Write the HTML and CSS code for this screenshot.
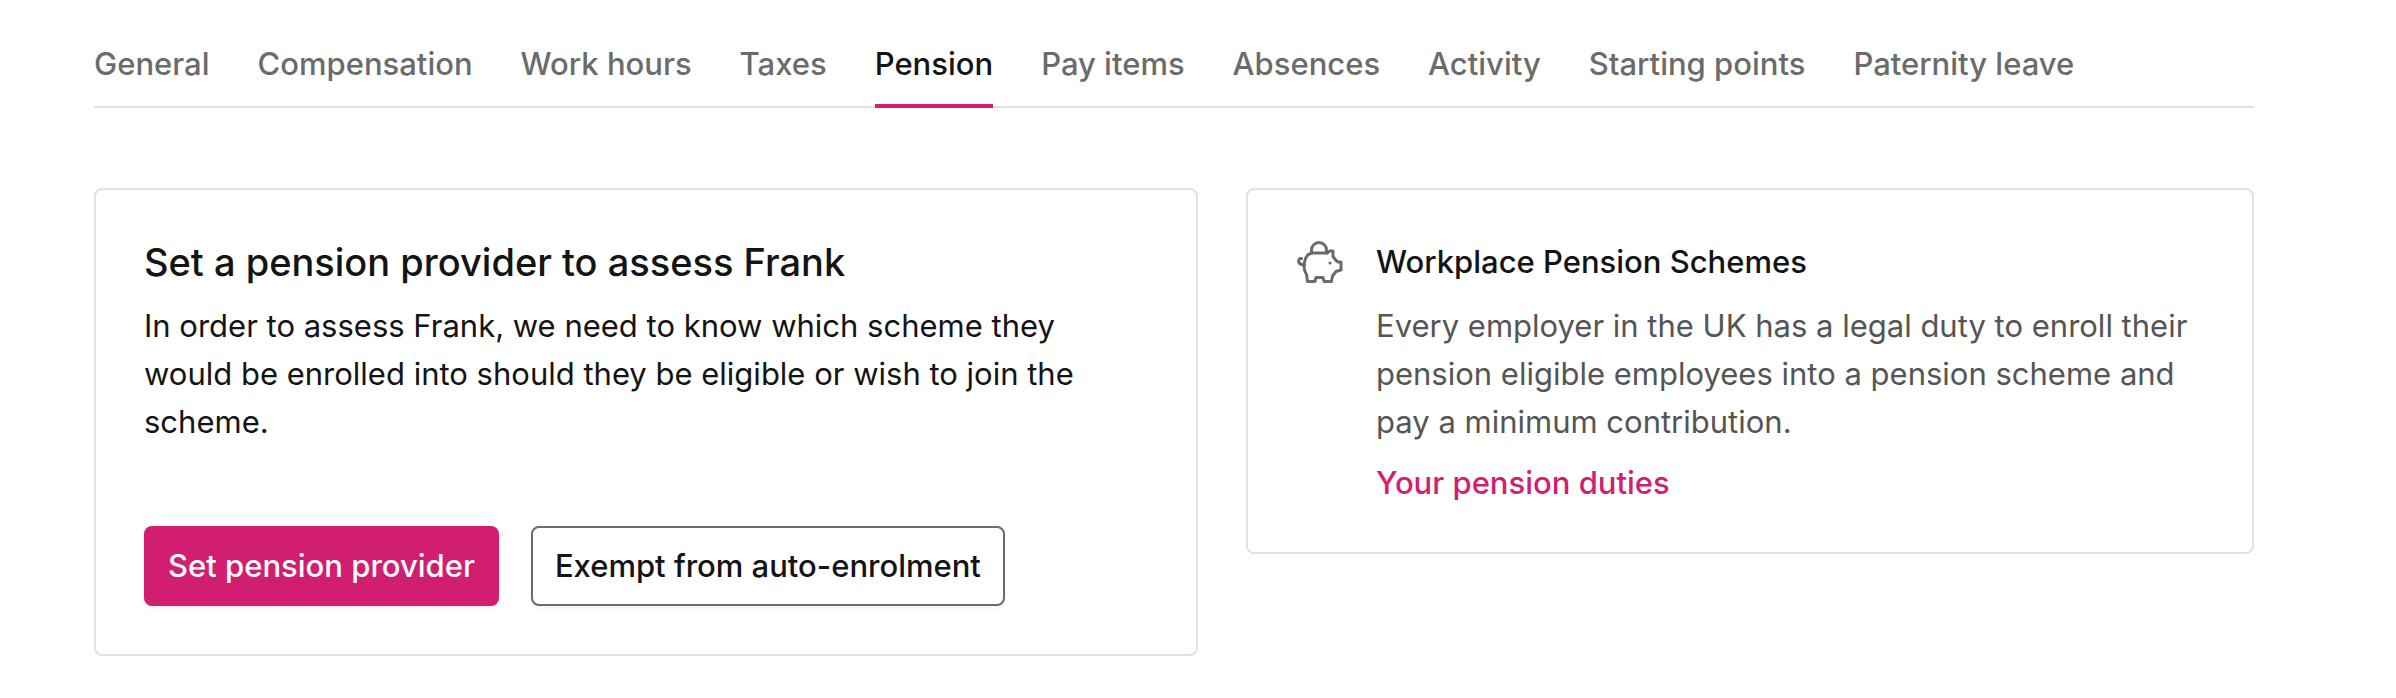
FILE: index.html
```html
<!DOCTYPE html>
<html lang="en">
<head>
<meta charset="utf-8">
<title>Pension</title>
<link rel="stylesheet" href="styles.css">
</head>
<body>
<div class="page">
  <nav class="tabs" aria-label="Employee sections">
    <a class="tab" href="#general">General</a>
    <a class="tab" href="#compensation">Compensation</a>
    <a class="tab" href="#work-hours">Work hours</a>
    <a class="tab" href="#taxes">Taxes</a>
    <a class="tab tab-active" href="#pension" aria-current="page">Pension</a>
    <a class="tab" href="#pay-items">Pay items</a>
    <a class="tab" href="#absences">Absences</a>
    <a class="tab" href="#activity">Activity</a>
    <a class="tab" href="#starting-points">Starting points</a>
    <a class="tab" href="#paternity-leave">Paternity leave</a>
  </nav>
  <main class="columns">
    <section class="card">
      <h1 class="title">Set a pension provider to assess Frank</h1>
      <p class="text">In order to assess Frank, we need to know which scheme they would be enrolled into should they be eligible or wish to join the scheme.</p>
      <div class="actions">
        <button class="button button-primary" type="button">Set pension provider</button>
        <button class="button" type="button">Exempt from auto-enrolment</button>
      </div>
    </section>
    <aside class="card info">
      <svg class="icon" viewBox="16 13 48 48" aria-hidden="true">
        <path d="M31.500 28v-3a7.500 7.500 0 0 1 15 0v3"/>
        <path d="M33 28h14.500l2-2H53v5.500l3.500 4.500 1.500 1h3v8l-5 1.500-3.500 4.500-1 5.500h-7.500l-1-4h-7l-1 4h-7.500l-1-7C22 43 24 28 33 28z"/>
        <path d="M21.500 33.500c-2.500-.5-3.500 2-2.500 4s3 2.500 5.500 2.500"/>
        <circle class="icon-eye" cx="50" cy="38" r="1.500"/>
      </svg>
      <div class="info-body">
        <h2 class="subtitle">Workplace Pension Schemes</h2>
        <p class="text text-muted">Every employer in the UK has a legal duty to enroll their pension eligible employees into a pension scheme and pay a minimum contribution.</p>
        <a class="link" href="#duties">Your pension duties</a>
      </div>
    </aside>
  </main>
</div>
</body>
</html>
```
FILE: styles.css
```css
* { box-sizing: border-box; }

body {
  margin: 0;
  background: #fff;
  color: #141414;
  font-family: Inter, "Liberation Sans", sans-serif;
  font-size: 31px;
  line-height: 48px;
}

.page { padding: 40px 142px 40px 94px; }

.tabs {
  display: flex;
  gap: 48px;
  border-bottom: 2px solid #e1e1e1;
}

.tab {
  margin-bottom: -2px;
  padding-bottom: 16px;
  border-bottom: 4px solid transparent;
  color: #6b6b6b;
  font-weight: 500;
  text-decoration: none;
  white-space: nowrap;
}

.tab-active {
  border-bottom-color: #d11e70;
  color: #141414;
}

.columns {
  display: grid;
  grid-template-columns: 23fr 21fr;
  align-items: start;
  gap: 48px;
  margin-top: 80px;
}

.card {
  padding: 48px;
  border: 2px solid #e1e1e1;
  border-radius: 8px;
}

.title, .subtitle, .text { margin: 0; }
.title { font-size: 38px; font-weight: 500; }
.subtitle { font-size: 31px; font-weight: 500; }

.text {
  max-width: 992px;
  margin-top: 16px;
}

.text-muted { color: #555; }

.actions {
  display: flex;
  gap: 32px;
  margin-top: 80px;
}

.button {
  height: 80px;
  padding: 0 22px;
  border: 2px solid #6b6b6b;
  border-radius: 8px;
  background: #fff;
  box-shadow: 0 2px 4px rgba(0, 0, 0, 0.06);
  color: #141414;
  font: inherit;
  font-weight: 500;
}

.button-primary {
  border-color: #d11e70;
  background: #d11e70;
  color: #fff;
}

.info {
  display: flex;
  gap: 32px;
}

.icon {
  flex: none;
  width: 48px;
  height: 48px;
  fill: none;
  stroke: #6b6b6b;
  stroke-width: 3;
  stroke-linecap: round;
  stroke-linejoin: round;
}

.icon-eye {
  fill: #6b6b6b;
  stroke: none;
}

.link {
  display: block;
  margin-top: 16px;
  color: #d11e70;
  font-weight: 500;
  line-height: 42px;
  text-decoration: none;
}
```
